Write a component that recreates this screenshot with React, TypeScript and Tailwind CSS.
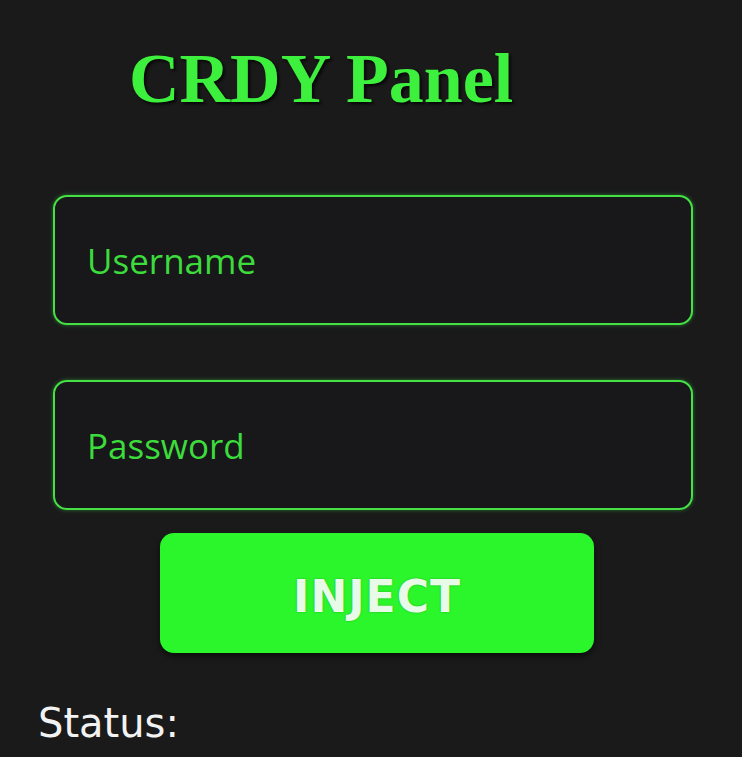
import React from 'react';

/**
 * CRDY Panel — login card with two glowing fields and the inject button.
 */

export default function App() {
  return (
    <div className="min-h-[757px] w-full bg-[#1a1a1b] pt-[44px] overflow-hidden">
      <h1 className="ml-[129px] text-[70px] leading-none font-bold text-[#3ef03e] [font-family:'Liberation_Serif',serif] [text-shadow:2px_2px_3px_rgba(0,0,0,0.8)]">
        CRDY Panel
      </h1>

      <div className="mt-[81px] ml-[53px] w-[640px] flex flex-col gap-[55px]">
        <Field placeholder="Username" />
        <Field placeholder="Password" type="password" />
      </div>

      <button className="mt-[23px] ml-[160px] w-[434px] h-[120px] pt-[8px] rounded-[14px] bg-[#2bf52b] text-[44px] font-bold tracking-[1px] text-[#e8fbe8] [font-family:'DejaVu_Sans',sans-serif] shadow-[0_3px_6px_rgba(0,0,0,0.6)] [text-shadow:0_0_2px_rgba(0,80,0,0.4)]">
        INJECT
      </button>

      <p className="mt-[50px] ml-[38px] text-[40px] leading-none text-[#f2f2f2] [font-family:'DejaVu_Sans',sans-serif]">
        Status:
      </p>
    </div>
  );
}

interface FieldProps {
  placeholder: string;
  type?: string;
}

function Field({ placeholder, type = 'text' }: FieldProps) {
  return (
    <input
      type={type}
      placeholder={placeholder}
      className="h-[130px] w-full rounded-[14px] border-2 border-[#45e045] bg-[#18181a] pl-[32px] text-[35px] text-[#3bdc3b] placeholder:text-[#3bdc3b] outline-none [font-family:'Open_Sans',sans-serif] shadow-[0_0_4px_rgba(60,220,60,0.45)]"
    />
  );
}
